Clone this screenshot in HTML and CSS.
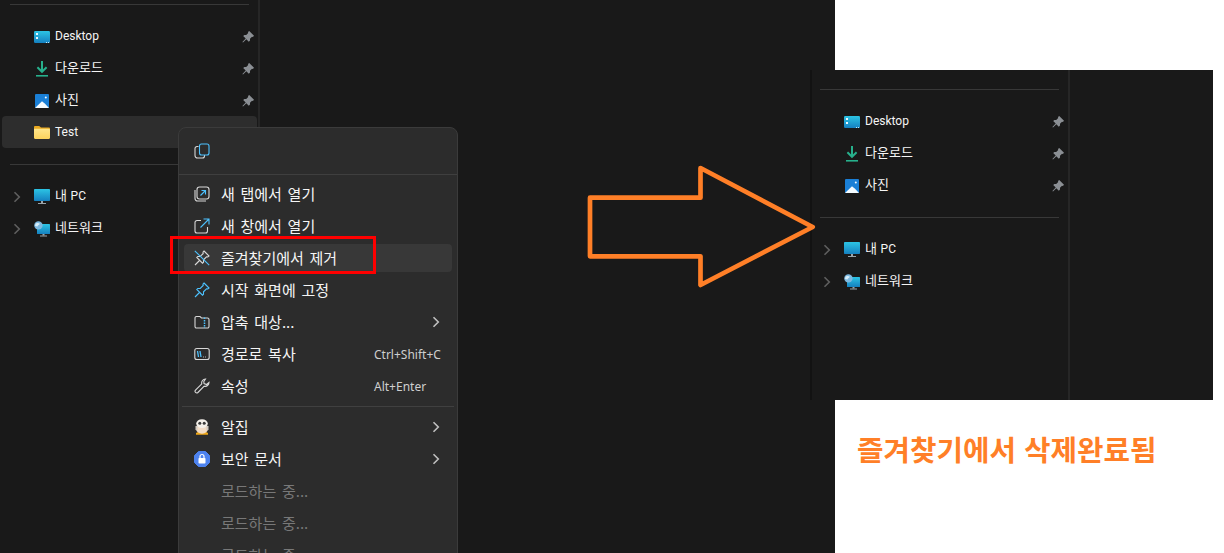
FILE: index.html
```html
<!DOCTYPE html>
<html lang="ko">
<head>
    <meta charset="UTF-8">
    <meta name="viewport" content="width=device-width, initial-scale=1.0">
    <title>즐겨찾기에서 제거</title>
    <link rel="stylesheet" href="styles.css">
</head>
<body>

    <!-- shared icons -->
    <svg class="icon-defs" width="0" height="0">
        <defs>
            <linearGradient id="blue-screen" x1="0" y1="0" x2="0" y2="1">
                <stop offset="0" stop-color="#2cc4e4"/>
                <stop offset="1" stop-color="#1580c0"/>
            </linearGradient>
            <linearGradient id="folder-front" x1="0" y1="0" x2="0" y2="1">
                <stop offset="0" stop-color="#ffe68c"/>
                <stop offset="1" stop-color="#fcd35c"/>
            </linearGradient>
        </defs>
        <symbol id="i-desktop" viewBox="0 0 16 16">
            <rect x="0" y="2" width="16" height="12" rx="1.2" fill="url(#blue-screen)"/>
            <rect x="2" y="4" width="2" height="2" fill="#e8f8ff"/>
            <rect x="2" y="8" width="2" height="2" fill="#e8f8ff"/>
            <rect x="12" y="13" width="1" height="1" fill="#bfe9f7"/>
            <rect x="14" y="13" width="1" height="1" fill="#bfe9f7"/>
        </symbol>
        <symbol id="i-download" viewBox="0 0 16 16">
            <path d="M8 0v11M3.400 6.200 8 10.800l4.600-4.600" fill="none" stroke="#27b08c" stroke-width="2"/>
            <rect x="2" y="14" width="12" height="1.600" fill="#27b08c"/>
        </symbol>
        <symbol id="i-photo" viewBox="0 0 16 16">
            <rect x="1" y="1" width="14" height="14" rx="1" fill="#1a7fd6"/>
            <path d="M1 15 8 8.200l3 2.600 4 4.200z" fill="#f4fbff"/>
            <circle cx="11.800" cy="4.400" r="1" fill="#f4fbff"/>
        </symbol>
        <symbol id="i-folder" viewBox="0 0 16 16">
            <path d="M0 2.200C0 1.500.5 1 1.200 1h4l1.800 1.600h7.800c.7 0 1.200.5 1.200 1.200V7H0z" fill="#e8a820"/>
            <path d="M0 3.800h14.800c.7 0 1.200.5 1.200 1.200v7.800c0 .7-.5 1.200-1.200 1.200H1.200C.5 14 0 13.500 0 12.800z" fill="url(#folder-front)"/>
        </symbol>
        <symbol id="i-pc" viewBox="0 0 16 16">
            <rect x="0" y="0" width="16" height="12" rx=".8" fill="url(#blue-screen)"/>
            <rect x="7" y="12" width="2" height="2" fill="#9aa4aa"/>
            <rect x="4" y="14" width="8" height="1" fill="#9aa4aa"/>
        </symbol>
        <symbol id="i-network" viewBox="0 0 16 16">
            <rect x="3" y="3" width="13" height="10" rx=".6" fill="url(#blue-screen)"/>
            <rect x="8.500" y="13" width="2" height="1.500" fill="#9aa4aa"/>
            <rect x="6" y="14.500" width="7" height="1" fill="#9aa4aa"/>
            <circle cx="4.400" cy="4.400" r="4.200" fill="#7db9e0"/>
            <path d="M2 2.400c1.400-.8 3-.6 3.800.4-.4 1.200-1.800 1.400-2.400 2.600L1.200 5C1 4 1.200 3 2 2.400z" fill="#d8eefa"/>
        </symbol>
        <symbol id="i-pin" viewBox="0 0 12 12">
            <path d="M7.200 0 12 4.800 10.900 5.900 10 5.700 8 7.700 8 9.500 6.800 10.700 4.300 8.200 1 11.500 .4 10.900 3.700 7.600 1.200 5.100 2.400 3.900 4.200 3.900 6.200 1.900 6 1z" fill="#8b8f94"/>
        </symbol>
        <symbol id="i-chevron" viewBox="0 0 8 12">
            <path d="M1.500 1.200 6.300 6 1.500 10.800" fill="none" stroke="currentColor" stroke-width="1.600"/>
        </symbol>
    </svg>

    <div class="page">

        <section class="shot shot-before">
            <nav class="nav">
                <div class="nav-line"></div>
                <ul class="nav-list">
                    <li class="nav-row"><span class="nav-arrow"></span><svg class="nav-icon"><use href="#i-desktop"/></svg><span class="nav-label latin">Desktop</span><svg class="nav-pin"><use href="#i-pin"/></svg></li>
                    <li class="nav-row"><span class="nav-arrow"></span><svg class="nav-icon"><use href="#i-download"/></svg><span class="nav-label">다운로드</span><svg class="nav-pin"><use href="#i-pin"/></svg></li>
                    <li class="nav-row"><span class="nav-arrow"></span><svg class="nav-icon"><use href="#i-photo"/></svg><span class="nav-label">사진</span><svg class="nav-pin"><use href="#i-pin"/></svg></li>
                    <li class="nav-row selected"><span class="nav-arrow"></span><svg class="nav-icon"><use href="#i-folder"/></svg><span class="nav-label latin">Test</span></li>
                </ul>
                <div class="nav-line"></div>
                <ul class="nav-list">
                    <li class="nav-row"><span class="nav-arrow"><svg class="chevron"><use href="#i-chevron"/></svg></span><svg class="nav-icon"><use href="#i-pc"/></svg><span class="nav-label">내 <span class="latin">PC</span></span></li>
                    <li class="nav-row"><span class="nav-arrow"><svg class="chevron"><use href="#i-chevron"/></svg></span><svg class="nav-icon"><use href="#i-network"/></svg><span class="nav-label">네트워크</span></li>
                </ul>
            </nav>

            <div class="menu">
                <div class="menu-tools">
                    <svg class="menu-icon" viewBox="0 0 16 16" fill="none" stroke-width="1.100">
                        <path d="M4.500 3.500H3A2 2 0 0 0 1 5.500V12.500A2.500 2.500 0 0 0 3.500 15H8.500A2 2 0 0 0 10.500 13V12" stroke="#d8d8d8"/>
                        <rect x="5.500" y="1" width="9.500" height="11" rx="2" stroke="#4cc2ff"/>
                    </svg>
                </div>
                <div class="menu-group">
                    <div class="menu-item">
                        <svg class="menu-icon" viewBox="0 0 16 16" fill="none" stroke-width="1.100">
                            <path d="M1 4V12.500A2.500 2.500 0 0 0 3.500 15H12" stroke="#d8d8d8"/>
                            <rect x="3" y="1" width="12" height="12" rx="2.500" stroke="#d8d8d8"/>
                            <path d="M6.500 9.500 11.500 4.500M7.500 4.500H11.500V8.500" stroke="#4cc2ff"/>
                        </svg>
                        <span class="menu-label">새 탭에서 열기</span>
                    </div>
                    <div class="menu-item">
                        <svg class="menu-icon" viewBox="0 0 16 16" fill="none" stroke-width="1.100">
                            <path d="M7 2.500H3A2 2 0 0 0 1 4.500V13A2 2 0 0 0 3 15H11.500A2 2 0 0 0 13.500 13V9" stroke="#d8d8d8"/>
                            <path d="M6.500 9.500 15 1M9.500 1H15V6.500" stroke="#4cc2ff"/>
                        </svg>
                        <span class="menu-label">새 창에서 열기</span>
                    </div>
                    <div class="menu-item active">
                        <svg class="menu-icon" viewBox="0 0 16 16" fill="none" stroke-width="1.100">
                            <path d="M10 1 15 6 13.800 7 12.500 6.800 9.500 9.800 9.500 12.200 8.500 13.200 2.800 7.500 3.800 6.500 6.200 6.500 9.200 3.500 9 2.200zM5.500 10.500 1 15" stroke="#d8d8d8"/>
                            <path d="M.8 .8 15.200 15.200" stroke="#4cc2ff"/>
                        </svg>
                        <span class="menu-label">즐겨찾기에서 제거</span>
                    </div>
                    <div class="menu-item">
                        <svg class="menu-icon" viewBox="0 0 16 16" fill="none" stroke-width="1.100">
                            <path d="M10 1 15 6 13.800 7 12.500 6.800 9.500 9.800 9.500 12.200 8.500 13.200 2.800 7.500 3.800 6.500 6.200 6.500 9.200 3.500 9 2.200zM5.500 10.500 1 15" stroke="#4cc2ff"/>
                        </svg>
                        <span class="menu-label">시작 화면에 고정</span>
                    </div>
                    <div class="menu-item">
                        <svg class="menu-icon" viewBox="0 0 16 16" fill="none" stroke-width="1.100">
                            <path d="M1 4A1.500 1.500 0 0 1 2.500 2.500H6L7.500 4H13.500A1.500 1.500 0 0 1 15 5.500V12.500A1.500 1.500 0 0 1 13.500 14H2.500A1.500 1.500 0 0 1 1 12.500Z" stroke="#d8d8d8"/>
                            <path d="M10.500 3.500V14" stroke="#4cc2ff" stroke-width="1.500" stroke-dasharray="1.500 1"/>
                        </svg>
                        <span class="menu-label">압축 대상...</span>
                        <svg class="chevron menu-chevron"><use href="#i-chevron"/></svg>
                    </div>
                    <div class="menu-item">
                        <svg class="menu-icon" viewBox="0 0 16 16" fill="none" stroke-width="1.100">
                            <rect x=".8" y="2.500" width="14.400" height="11" rx="2" stroke="#d8d8d8"/>
                            <path d="M3.500 5 4.500 11M6 5 7 11" stroke="#4cc2ff" stroke-width="1.300"/>
                            <path d="M9 11H9.800M11.200 11H12" stroke="#d8d8d8"/>
                        </svg>
                        <span class="menu-label">경로로 복사</span>
                        <span class="menu-key">Ctrl+Shift+C</span>
                    </div>
                    <div class="menu-item">
                        <svg class="menu-icon" viewBox="0 0 16 16" fill="none" stroke="#d8d8d8" stroke-width="1.100">
                            <path d="M11.500 1A3.800 3.800 0 0 0 7.800 5.800L1.500 12.100A1.700 1.700 0 0 0 3.900 14.500L10.200 8.200A3.800 3.800 0 0 0 15 4.500L12.600 6.500 10 5.500 9.800 3.500 11.500 1Z"/>
                        </svg>
                        <span class="menu-label">속성</span>
                        <span class="menu-key">Alt+Enter</span>
                    </div>
                    <hr class="menu-line">
                    <div class="menu-item">
                        <svg class="menu-icon" viewBox="0 0 16 16">
                            <path d="M2 14 5 12.500H11L14 14V15.800H2Z" fill="#f0a818"/>
                            <ellipse cx="8" cy="9.800" rx="6" ry="5" fill="#f2dcc6"/>
                            <ellipse cx="8" cy="4.600" rx="5.800" ry="4.400" fill="#f4f0ea"/>
                            <circle cx="5.800" cy="4.300" r="1.500" fill="#3a3a3a"/>
                            <circle cx="10.200" cy="4.300" r="1.500" fill="#3a3a3a"/>
                            <rect x="1.500" y="7" width="2" height="4" fill="#cfc8c0"/>
                            <rect x="12.500" y="7" width="2" height="4" fill="#cfc8c0"/>
                        </svg>
                        <span class="menu-label">알집</span>
                        <svg class="chevron menu-chevron"><use href="#i-chevron"/></svg>
                    </div>
                    <div class="menu-item">
                        <svg class="menu-icon" viewBox="0 0 16 16">
                            <path d="M4.500 .5H11.500L15.500 4.500V11.500L11.500 15.500H4.500L.5 11.500V4.500Z" fill="#4d82ee" stroke="#4d82ee" stroke-linejoin="round"/>
                            <rect x="4.500" y="7" width="7" height="5.500" rx=".8" fill="#fff"/>
                            <path d="M6 7V5.500A2 2 0 0 1 10 5.500V7" fill="none" stroke="#fff" stroke-width="1.200"/>
                        </svg>
                        <span class="menu-label">보안 문서</span>
                        <svg class="chevron menu-chevron"><use href="#i-chevron"/></svg>
                    </div>
                    <div class="menu-item disabled"><span class="menu-icon"></span><span class="menu-label">로드하는 중...</span></div>
                    <div class="menu-item disabled"><span class="menu-icon"></span><span class="menu-label">로드하는 중...</span></div>
                    <div class="menu-item disabled"><span class="menu-icon"></span><span class="menu-label">로드하는 중...</span></div>
                </div>
            </div>

            <div class="red-box"></div>
        </section>

        <section class="result">
            <div class="shot shot-after">
                <nav class="nav">
                    <div class="nav-line"></div>
                    <ul class="nav-list">
                        <li class="nav-row"><span class="nav-arrow"></span><svg class="nav-icon"><use href="#i-desktop"/></svg><span class="nav-label latin">Desktop</span><svg class="nav-pin"><use href="#i-pin"/></svg></li>
                        <li class="nav-row"><span class="nav-arrow"></span><svg class="nav-icon"><use href="#i-download"/></svg><span class="nav-label">다운로드</span><svg class="nav-pin"><use href="#i-pin"/></svg></li>
                        <li class="nav-row"><span class="nav-arrow"></span><svg class="nav-icon"><use href="#i-photo"/></svg><span class="nav-label">사진</span><svg class="nav-pin"><use href="#i-pin"/></svg></li>
                    </ul>
                    <div class="nav-line"></div>
                    <ul class="nav-list">
                        <li class="nav-row"><span class="nav-arrow"><svg class="chevron"><use href="#i-chevron"/></svg></span><svg class="nav-icon"><use href="#i-pc"/></svg><span class="nav-label">내 <span class="latin">PC</span></span></li>
                        <li class="nav-row"><span class="nav-arrow"><svg class="chevron"><use href="#i-chevron"/></svg></span><svg class="nav-icon"><use href="#i-network"/></svg><span class="nav-label">네트워크</span></li>
                    </ul>
                </nav>
            </div>
            <p class="caption">즐겨찾기에서 삭제완료됨</p>
        </section>

        <!-- arrow drawn on top of both pictures -->
        <svg class="big-arrow" width="240" height="130" viewBox="0 0 240 130">
            <path d="M3 33.700H113.500V4L225.700 63 113.500 121V92.300H3Z" fill="none" stroke="#ff7f27" stroke-width="4.700" stroke-linejoin="round"/>
        </svg>
    </div>

</body>
</html>
```

FILE: styles.css
```css
* {
    margin: 0;
    padding: 0;
    box-sizing: border-box;
}

html, body {
    height: 100%;
    overflow: hidden;
}

body {
    font-family: "Noto Sans CJK KR", "Noto Sans", sans-serif;
    font-size: 13px;
    background-color: #fff;
    color: #f5f5f5;
}

.icon-defs {
    position: absolute;
}

.latin {
    font-family: Roboto, "Noto Sans", sans-serif;
    font-size: 12px;
}

.page {
    position: relative;
    display: flex;
    height: 553px;
    overflow: hidden;
}

.shot {
    background-color: #191919;
    overflow: hidden;
}

.shot-before {
    position: relative;
    flex: 0 0 835px;
}

.shot-before .nav {
    padding-top: 4px;
}

.result {
    position: relative;
    flex: 0 0 403px;
    margin-left: -25px;
    padding-top: 70px;
}

.shot-after {
    height: 330px;
    box-shadow: inset 2px 0 #121212;
}

.shot-after .nav {
    padding-top: 19px;
}

/* navigation pane */
.nav {
    width: 260px;
    height: 100%;
    padding-left: 2px;
    padding-right: 1px;
    border-right: 2px solid #262626;
}

.nav-line {
    width: 239px;
    height: 1px;
    margin-left: 8px;
    background-color: #383838;
}

.nav-list {
    list-style: none;
    padding: 15px 0 16px;
}

.nav-row {
    display: flex;
    align-items: center;
    width: 255px;
    height: 32px;
    padding-bottom: 1px;
    border-radius: 4px;
}

.nav-row.selected {
    background-color: #2d2d2d;
}

.nav-arrow {
    display: flex;
    align-items: center;
    flex: 0 0 32px;
    padding: 3px 0 0 11px;
    color: #5f5f5f;
}

.chevron {
    width: 8px;
    height: 12px;
}

.nav-icon {
    flex: 0 0 16px;
    width: 16px;
    height: 16px;
    margin: 2px 5px 0 0;
}

.nav-label {
    flex: 1;
    margin-bottom: 2px;
    white-space: nowrap;
}

.nav-label.latin {
    margin-bottom: 0;
}

.nav-pin {
    width: 12px;
    height: 12px;
    margin: 2px 3px 0 0;
}

/* context menu */
.menu {
    position: absolute;
    top: 127px;
    left: 178px;
    width: 280px;
    background-color: #2c2c2c;
    border: 1px solid #3b3b3b;
    border-radius: 8px;
    font-size: 15px;
    word-spacing: 1.5px;
}

.menu-tools {
    display: flex;
    align-items: center;
    height: 47px;
    padding-left: 15px;
    border-bottom: 1px solid #3f3f3f;
}

.menu-group {
    display: flex;
    flex-direction: column;
    gap: 4px;
    padding: 5px;
}

.menu-item {
    display: flex;
    align-items: center;
    height: 28px;
    padding-left: 10px;
    border-radius: 4px;
}

.menu-item.active {
    background-color: #383838;
}

.menu-item.disabled {
    color: #787878;
}

.menu-icon {
    display: block;
    flex: 0 0 16px;
    width: 16px;
    height: 16px;
    margin-right: 11px;
}

.menu-label {
    flex: 1;
    margin-bottom: 2px;
    white-space: nowrap;
}

.menu-key {
    flex: 0 0 78px;
    font-family: "Noto Sans", sans-serif;
    font-size: 12px;
    word-spacing: 0;
    color: #cfcfcf;
}

.menu-chevron {
    margin-right: 12px;
    color: #c0c0c0;
}

.menu-line {
    height: 1px;
    margin: 2px -2px;
    border: none;
    background-color: #404040;
}

/* marks added over the screenshots */
.red-box {
    position: absolute;
    top: 236px;
    left: 170px;
    width: 206px;
    height: 38px;
    border: 3px solid #f00;
}

.big-arrow {
    position: absolute;
    top: 164px;
    left: 587px;
}

.caption {
    padding: 31px 0 0 47px;
    font-size: 28.8px;
    font-weight: 700;
    line-height: 36px;
    color: #ff7f27;
    white-space: nowrap;
}
```
